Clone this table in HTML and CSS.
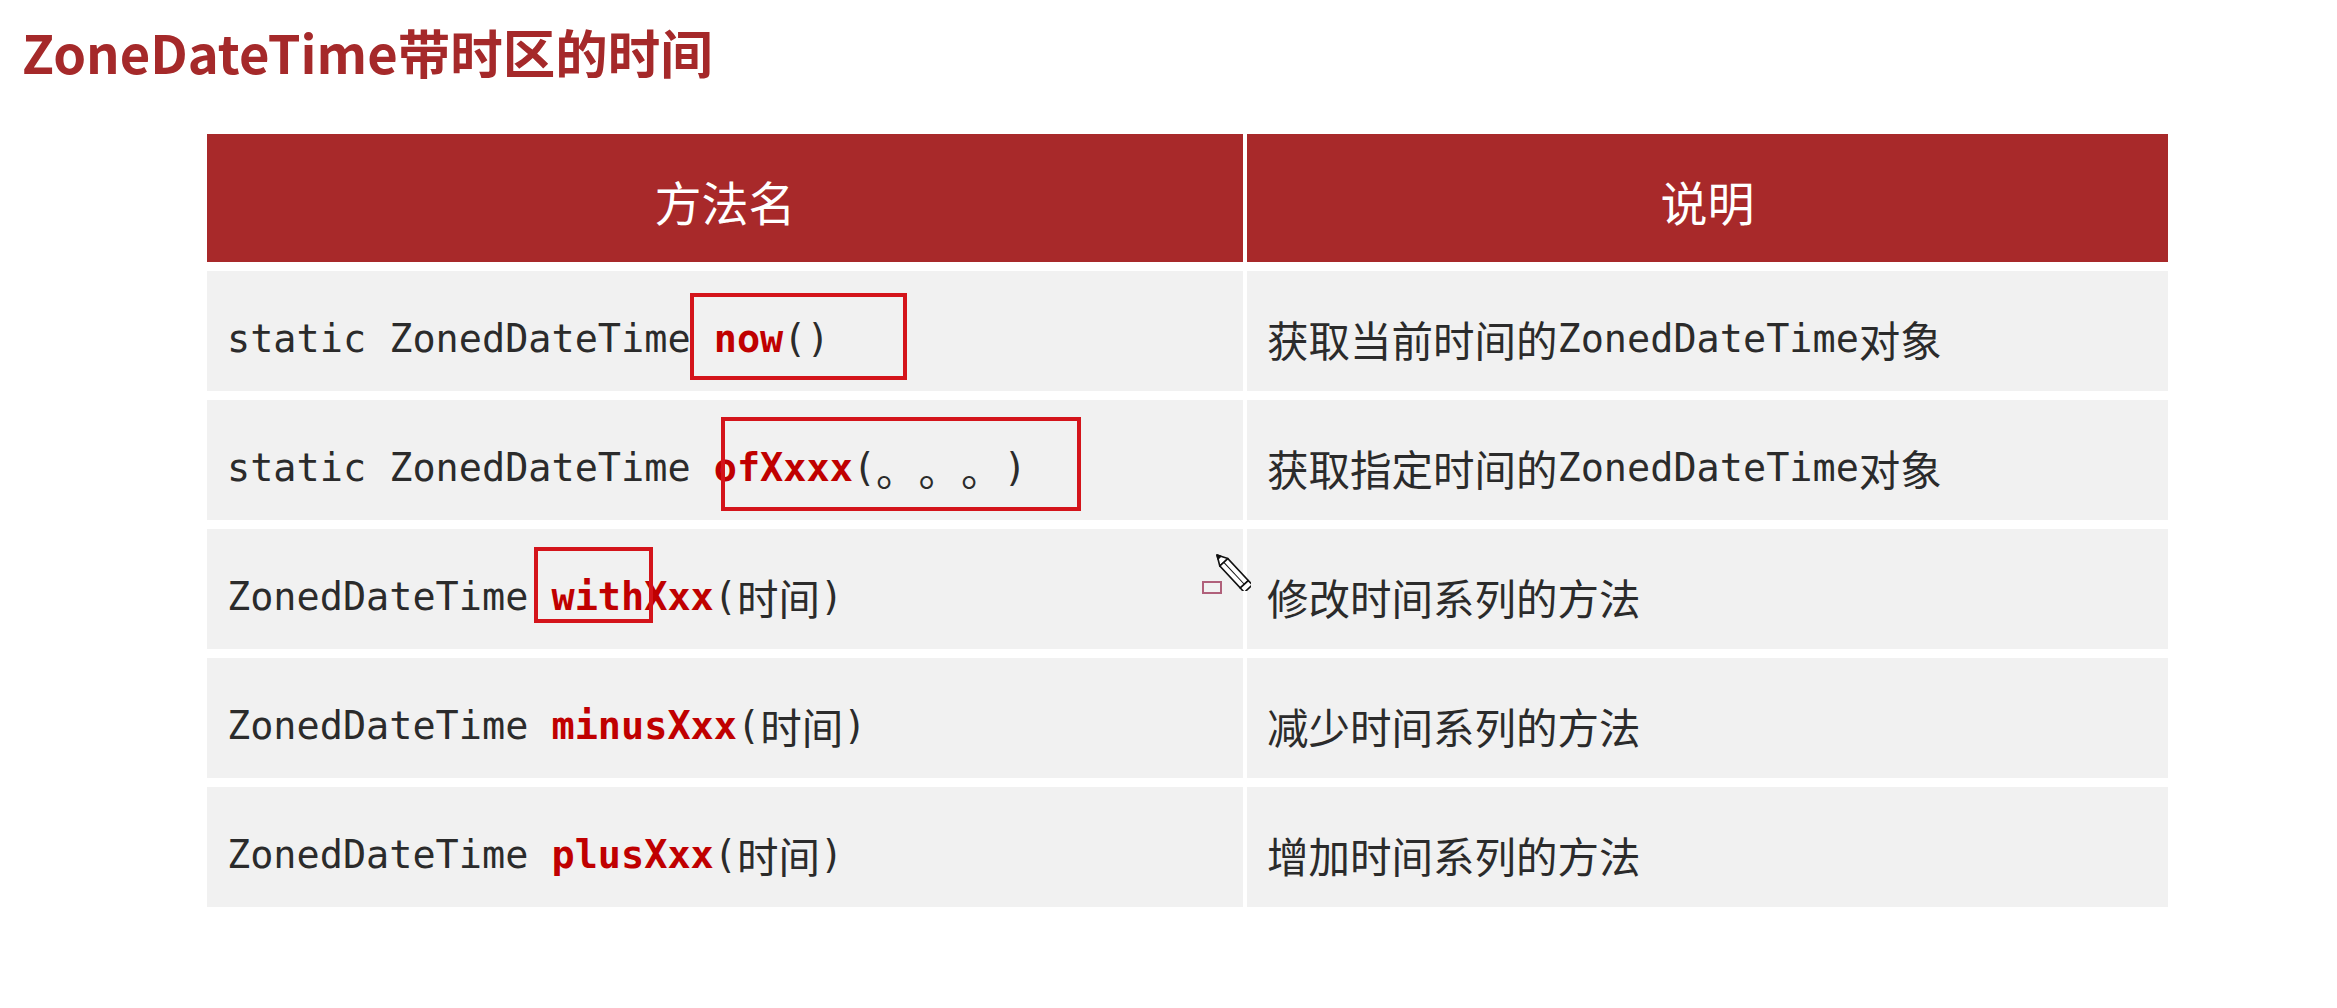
FILE: index.html
```html
<!DOCTYPE html>
<html lang="zh-CN">
<head>
<meta charset="utf-8">
<title>ZoneDateTime带时区的时间</title>
<link rel="stylesheet" href="styles.css">
</head>
<body>
<h1 class="title">ZoneDateTime带时区的时间</h1>
<div class="table">
  <div class="th">方法名</div>
  <div class="th">说明</div>

  <div class="td code">static ZonedDateTime <b class="m">now</b>()</div>
  <div class="td desc"><span class="cjk">获取当前时间的</span>ZonedDateTime<span class="cjk">对象</span></div>

  <div class="td code">static ZonedDateTime <b class="m">ofXxxx</b>(<span class="cjk dots">。。。</span>)</div>
  <div class="td desc"><span class="cjk">获取指定时间的</span>ZonedDateTime<span class="cjk">对象</span></div>

  <div class="td code">ZonedDateTime <b class="m">withXxx</b>(<span class="cjk">时间</span>)</div>
  <div class="td desc"><span class="cjk">修改时间系列的方法</span></div>

  <div class="td code">ZonedDateTime <b class="m">minusXxx</b>(<span class="cjk">时间</span>)</div>
  <div class="td desc"><span class="cjk">减少时间系列的方法</span></div>

  <div class="td code">ZonedDateTime <b class="m">plusXxx</b>(<span class="cjk">时间</span>)</div>
  <div class="td desc"><span class="cjk">增加时间系列的方法</span></div>

  <div class="mark mark-now"></div>
  <div class="mark mark-of"></div>
  <div class="mark mark-with"></div>
  <div class="cursor-box"></div>
  <svg class="pencil" viewBox="0 0 36 38" width="36" height="38">
    <g transform="translate(2,2) rotate(47)" fill="#fff" stroke="#111" stroke-width="1.6" stroke-linejoin="round">
      <polygon points="0,0 10,-5.5 10,5.5"/>
      <polygon points="0,0 3.5,-1.9 3.5,1.9" fill="#111"/>
      <rect x="10" y="-5.5" width="30" height="11"/>
      <line x1="10" y1="0" x2="40" y2="0" stroke-width="1"/>
      <rect x="40" y="-5.5" width="6" height="11"/>
    </g>
  </svg>
</div>
</body>
</html>
```
FILE: styles.css
```css
body {
  margin: 0;
  background: #ffffff;
  font-family: "Noto Sans CJK SC", sans-serif;
}

.title {
  margin: 0;
  padding: 20px 0 0 22px;
  font-size: 52.5px;
  line-height: 62px;
  font-weight: 700;
  color: #a5292a;
}

.table {
  position: relative;
  margin: 52px 0 0 207px;
  width: 1961px;
  display: grid;
  grid-template-columns: 1036px 921px;
  grid-template-rows: 128px repeat(5, 120px);
  column-gap: 4px;
  row-gap: 9px;
}

.th {
  background: #a8292a;
  color: #ffffff;
  font-size: 47px;
  font-weight: 400;
  display: flex;
  align-items: center;
  justify-content: center;
  padding-top: 4px;
}

.td {
  background: #f1f1f1;
  color: #2b2b2b;
  display: flex;
  align-items: center;
  padding: 15px 0 0 20px;
  font-family: "DejaVu Sans Mono", "Noto Sans CJK SC", monospace;
  font-size: 38.5px;
  white-space: pre;
}

.cjk {
  font-family: "Noto Sans CJK SC", sans-serif;
  font-size: 41.5px;
  text-spacing-trim: space-all;
}

.dots {
  letter-spacing: 1px;
}

.m {
  color: #c00000;
  font-weight: 700;
}

.mark {
  position: absolute;
  border: 4px solid #d4141b;
  box-sizing: border-box;
}

.mark-now {
  left: 483px;
  top: 159px;
  width: 217px;
  height: 87px;
}

.mark-of {
  left: 514px;
  top: 283px;
  width: 360px;
  height: 94px;
}

.mark-with {
  left: 327px;
  top: 413px;
  width: 119px;
  height: 76px;
}

.cursor-box {
  position: absolute;
  left: 995px;
  top: 447px;
  width: 20px;
  height: 13px;
  border: 2px solid #b0607a;
  box-sizing: border-box;
}

.pencil {
  position: absolute;
  left: 1008px;
  top: 419px;
}
```
